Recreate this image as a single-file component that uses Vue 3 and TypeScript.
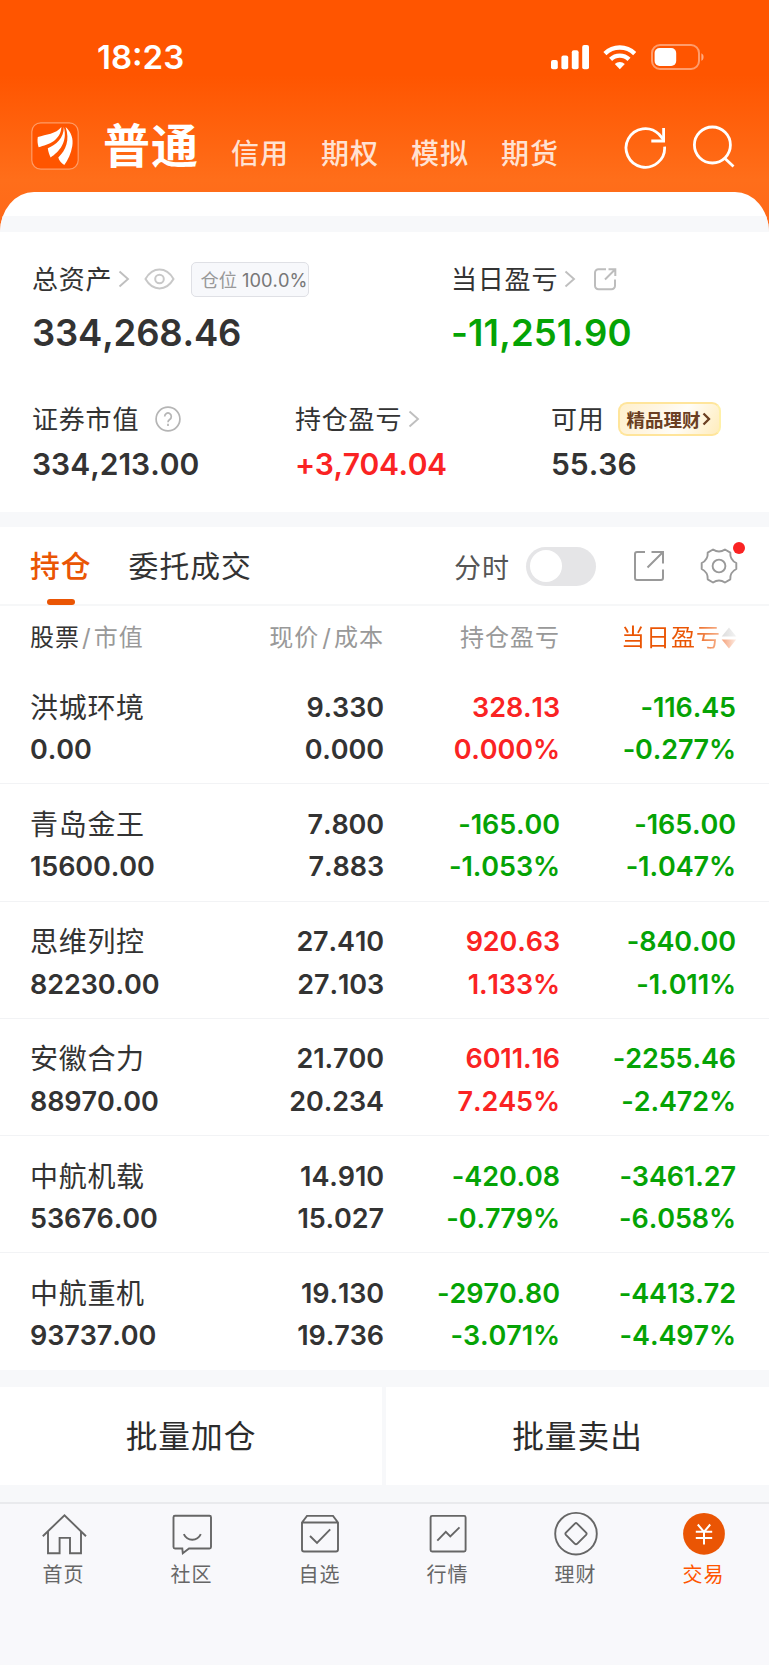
<script setup lang="ts">
type Pair = [string, string]

interface Holding {
  name: string
  value: string
  price: Pair
  profit: Pair
  day: Pair
}

const otherAccounts: string[] = ['信用', '期权', '模拟', '期货']

const holdings: Holding[] = [
  { name: '洪城环境', value: '0.00', price: ['9.330', '0.000'], profit: ['328.13', '0.000%'], day: ['-116.45', '-0.277%'] },
  { name: '青岛金王', value: '15600.00', price: ['7.800', '7.883'], profit: ['-165.00', '-1.053%'], day: ['-165.00', '-1.047%'] },
  { name: '思维列控', value: '82230.00', price: ['27.410', '27.103'], profit: ['920.63', '1.133%'], day: ['-840.00', '-1.011%'] },
  { name: '安徽合力', value: '88970.00', price: ['21.700', '20.234'], profit: ['6011.16', '7.245%'], day: ['-2255.46', '-2.472%'] },
  { name: '中航机载', value: '53676.00', price: ['14.910', '15.027'], profit: ['-420.08', '-0.779%'], day: ['-3461.27', '-6.058%'] },
  { name: '中航重机', value: '93737.00', price: ['19.130', '19.736'], profit: ['-2970.80', '-3.071%'], day: ['-4413.72', '-4.497%'] },
]

const navItems: string[] = ['首页', '社区', '自选', '行情', '理财', '交易']

const tone = (pair: Pair): string => (pair[0].startsWith('-') ? 'down' : 'up')
</script>

<template>
  <div class="screen">
    <header class="top">
      <div class="status">
        <span class="time">18:23</span>
        <svg class="status-icons" width="156" height="28" viewBox="0 0 156 28" fill="#fff">
          <rect x="1" y="17" width="6.8" height="9.2" rx="2" />
          <rect x="11.4" y="12.4" width="6.8" height="13.8" rx="2" />
          <rect x="21.8" y="7.2" width="6.8" height="19" rx="2" />
          <rect x="32.2" y="2" width="6.8" height="24.2" rx="2" />
          <g fill="none" stroke="#fff" stroke-width="4.4">
            <path d="M54.9 10.6a21.3 21.3 0 0 1 29.8 0" />
            <path d="M60.6 16.4a13.2 13.2 0 0 1 18.4 0" />
          </g>
          <path d="M69.8 26.2l-5-5.2a7.4 7.4 0 0 1 10 0z" />
          <rect x="102" y="2" width="47" height="24" rx="8" fill="none" stroke="#fff" stroke-opacity=".42" stroke-width="2" />
          <rect x="104.6" y="5" width="21.6" height="18" rx="5" />
          <path d="M151.4 10.2a4.4 4.4 0 0 1 0 7.6z" fill-opacity=".5" />
        </svg>
      </div>
      <div class="accounts">
        <svg class="logo" width="48" height="48" viewBox="0 0 48 48">
          <rect x=".8" y=".8" width="46.4" height="46.4" rx="9" fill="#ff5500" stroke="#ff9c66" stroke-width="1.2" />
          <g fill="#fff">
            <path d="M30.4 5C25 12 15 12.500 6.800 15C6.200 18.500 6.600 22 7.600 25.200C18 22.500 29.500 18.500 30.400 5Z" />
            <path d="M32.800 5C33 16 25 22.800 16.800 26.200C17.200 29.500 18.300 32.500 19.600 35.400C28 30 37 20 32.800 5Z" />
            <path d="M34.600 5C40.500 10.500 42.500 17 41.300 24C40 31.500 37 38 33.300 43C30.500 41 28 38.500 27.300 35.500C35 28 39 18 34.600 5Z" />
          </g>
        </svg>
        <h1 class="current">普通</h1>
        <nav class="others">
          <span v-for="a in otherAccounts" :key="a">{{ a }}</span>
        </nav>
        <svg class="tools" width="112" height="44" viewBox="0 0 112 44" fill="none" stroke="#fff" stroke-width="2.8">
          <path d="M41.600 21.600A19.300 19.300 0 1 1 36 9.300L40.400 14.500" />
          <path d="M40.600 3v13H28.300" />
          <circle cx="89.400" cy="20" r="18" />
          <path d="M101.500 33l9 8.600" />
        </svg>
      </div>
    </header>

    <main class="sheet">
      <div class="strip"></div>

      <section class="assets">
        <div class="line main-labels">
          <div class="half">
            <span class="label">总资产</span>
            <svg class="chev" width="12" height="18" viewBox="0 0 12 18"><path d="M1.500 1.500l8.500 7.500-8.500 7.500" /></svg>
            <svg class="eye" width="31" height="22" viewBox="0 0 31 22" fill="none" stroke="#c8c8c8" stroke-width="2">
              <path d="M1.500 11C5 5 9.500 1.600 15.500 1.600S26 5 29.500 11C26 17 21.500 20.400 15.500 20.400S5 17 1.500 11Z" />
              <circle cx="15.500" cy="11" r="4.300" />
            </svg>
            <span class="position"><i>仓位</i> 100.0%</span>
          </div>
          <div class="half">
            <span class="label">当日盈亏</span>
            <svg class="chev" width="12" height="18" viewBox="0 0 12 18"><path d="M1.500 1.500l8.500 7.500-8.500 7.500" /></svg>
            <svg class="share-sm" width="24" height="24" viewBox="0 0 24 24" fill="none" stroke="#bdbdbd" stroke-width="2">
              <path d="M13 2.200H5.500a3.500 3.500 0 0 0-3.500 3.500v13a3.500 3.500 0 0 0 3.500 3.500h13a3.500 3.500 0 0 0 3.500-3.500V12.500" />
              <path d="M12 12.500L22 2.500M15.500 2.200H22.300V9" />
            </svg>
          </div>
        </div>
        <div class="line main-values">
          <span class="half dark">334,268.46</span>
          <span class="half down">-11,251.90</span>
        </div>
        <div class="line sub-labels">
          <div class="c1">
            <span class="label">证券市值</span>
            <svg class="help" width="26" height="26" viewBox="0 0 26 26" fill="none" stroke="#b5b5b5" stroke-width="1.700">
              <circle cx="13" cy="13" r="11.900" />
              <path d="M9.700 10.500a3.300 3.500 0 1 1 5 3c-1.200.8-1.700 1.300-1.700 2.700M13 17.800v2.200" />
            </svg>
          </div>
          <div class="c2">
            <span class="label">持仓盈亏</span>
            <svg class="chev" width="12" height="18" viewBox="0 0 12 18"><path d="M1.500 1.500l8.500 7.500-8.500 7.500" /></svg>
          </div>
          <div class="c3">
            <span class="label">可用</span>
            <span class="promo">精品理财<svg width="9" height="14" viewBox="0 0 9 14"><path d="M1.500 1.500l5.500 5.500-5.500 5.500" fill="none" stroke="#6b3f22" stroke-width="2.300" /></svg></span>
          </div>
        </div>
        <div class="line sub-values">
          <span class="c1 dark">334,213.00</span>
          <span class="c2 up">+3,704.04</span>
          <span class="c3 dark">55.36</span>
        </div>
      </section>

      <div class="band"></div>

      <section class="tabs">
        <span class="tab active">持仓</span>
        <span class="tab">委托成交</span>
        <span class="minute">分时</span>
        <span class="toggle"><i></i></span>
        <svg class="share" width="32" height="32" viewBox="0 0 32 32" fill="none" stroke="#999" stroke-width="2">
          <path d="M12 2H4a2 2 0 0 0-2 2v24a2 2 0 0 0 2 2h24a2 2 0 0 0 2-2V19.500" />
          <path d="M14.500 17.500L30 2M18.500 2H30V13.500" />
        </svg>
        <span class="settings">
          <svg width="38" height="38" viewBox="0 0 38 38" fill="none" stroke="#999" stroke-width="1.900" stroke-linejoin="round">
            <path d="M13 2.500Q19 6.500 25 2.500L30.300 5.600Q29.800 12.750 36.300 16V22Q29.800 25.250 30.300 32.400L25 35.500Q19 31.500 13 35.500L7.700 32.400Q8.200 25.250 1.700 22V16Q8.200 12.750 7.700 5.600Z" />
            <circle cx="19" cy="19" r="6.400" />
          </svg>
          <b class="dot"></b>
        </span>
      </section>

      <section class="list">
        <div class="row head">
          <span class="col-a"><em>股票</em><u>/</u>市值</span>
          <span class="col">现价<u>/</u>成本</span>
          <span class="col">持仓盈亏</span>
          <span class="col sorted">
            <span class="sort-label">当日盈亏</span>
            <svg width="16" height="22" viewBox="0 0 16 22">
              <defs>
                <linearGradient id="sortUp" x1="0" x2="1"><stop offset="0" stop-color="#dcdcdc" /><stop offset="1" stop-color="#f3f3f3" /></linearGradient>
                <linearGradient id="sortDown" x1="0" x2="1"><stop offset="0" stop-color="#f5a078" /><stop offset="1" stop-color="#fdeee6" /></linearGradient>
              </defs>
              <path d="M8 .6L15.300 9.600H.7z" fill="url(#sortUp)" />
              <path d="M8 21.400L15.300 12.400H.7z" fill="url(#sortDown)" />
            </svg>
          </span>
        </div>
        <div v-for="h in holdings" :key="h.name" class="row stock">
          <div class="col-a"><span class="name">{{ h.name }}</span><span>{{ h.value }}</span></div>
          <div class="col"><span v-for="p in h.price" :key="p">{{ p }}</span></div>
          <div class="col" :class="tone(h.profit)"><span v-for="p in h.profit" :key="p">{{ p }}</span></div>
          <div class="col" :class="tone(h.day)"><span v-for="p in h.day" :key="p">{{ p }}</span></div>
        </div>
      </section>

      <section class="batch">
        <button type="button">批量加仓</button>
        <button type="button">批量卖出</button>
      </section>
    </main>

    <nav class="bottom">
      <div v-for="(label, i) in navItems" :key="label" class="item" :class="{ on: i === 5 }">
        <svg width="48" height="48" viewBox="0 0 48 48" fill="none" stroke="#666" stroke-width="1.900">
          <g v-if="i === 0"><path d="M2.800 26.200L24.500 5.300L46 26.200" /><path d="M8 21.500V43.200H19.600V27.900H30V43.200H41V21.500" /></g>
          <g v-else-if="i === 1">
            <path d="M7 5.800H41.500a1.500 1.500 0 0 1 1.500 1.500V37a1.500 1.500 0 0 1-1.500 1.500H21L14.800 43.300L14.300 38.500H7A1.500 1.500 0 0 1 5.500 37V7.300A1.500 1.500 0 0 1 7 5.800Z" />
            <path d="M15.800 24.200c3.500 7.300 13.500 7.300 17 0" />
          </g>
          <g v-else-if="i === 2">
            <path d="M6 12.500L11 5.900H37L42 12.500V39.500a2 2 0 0 1-2 2H8a2 2 0 0 1-2-2ZM6 12.500H42" />
            <path d="M14 26l7 7L34.200 19.300" />
          </g>
          <g v-else-if="i === 3"><rect x="6.600" y="5.900" width="35" height="35.600" rx="1.500" /><path d="M13.300 30.700L21.800 21.900L26.300 26.500L35.500 17.300" /></g>
          <g v-else-if="i === 4"><circle cx="24" cy="23.700" r="20.800" /><path d="M22.900 13.600q1.100-1 2.200 0l9 9q1 1.100 0 2.200l-9 9q-1.100 1-2.200 0l-9-9q-1-1.100 0-2.200z" /></g>
          <g v-else><circle cx="24" cy="23.800" r="20.900" fill="#ea5504" stroke="none" /><path d="M17.800 14.500L24 22L30.200 14.500M24 21.500V34.500M15.800 21.700H32.200M15.800 28H32.200" stroke="#fff" stroke-width="2" /></g>
        </svg>
        <span>{{ label }}</span>
      </div>
    </nav>
  </div>
</template>

<style>
body {
  background: #f8f8fb;
}
</style>

<style scoped>
.screen {
  width: 769px;
  height: 1665px;
  overflow: hidden;
  display: flex;
  flex-direction: column;
  background: linear-gradient(#ff5500 0, #ff5500 75px, #ff6e1a 180px, #ff6818 232px);
  font-family: Inter, 'Noto Sans CJK SC', sans-serif;
  font-kerning: none;
  color: #333;
}
.screen * {
  box-sizing: border-box;
}
i, em, u {
  font-style: normal;
  text-decoration: none;
}
svg {
  display: block;
  flex: none;
}
.top {
  height: 192px;
  flex: none;
  color: #fff;
}
.status {
  height: 114px;
  padding: 0 63px 0 97px;
  display: flex;
  justify-content: space-between;
  align-items: center;
}
.time {
  font-size: 33px;
  font-weight: 600;
  line-height: 40px;
  font-kerning: normal;
}
.accounts {
  height: 64px;
  padding: 0 34px 0 31px;
  display: flex;
  align-items: center;
}
.current {
  margin: 0 0 0 24px;
  width: 128px;
  font-size: 47px;
  font-weight: 700;
  line-height: 60px;
  letter-spacing: 1px;
}
.others {
  display: flex;
  gap: 32px;
  padding-top: 16px;
  font-size: 28px;
  font-weight: 500;
  line-height: 34px;
  letter-spacing: 1px;
  color: rgba(255, 255, 255, .82);
}
.tools {
  margin: 1px 0 0 auto;
}
.sheet {
  flex: none;
  height: 1310px;
  background: #fff;
  border-radius: 34px 34px 0 0 / 40px 40px 0 0;
  overflow: hidden;
}
.strip {
  margin-top: 24px;
  height: 16px;
  background: #f7f8fa;
}
.assets {
  height: 280px;
  padding: 29px 0 0 32px;
}
.line,
.line > div {
  display: flex;
  align-items: center;
}
.half { width: 419px; flex: none; }
.c1 { width: 263px; }
.c2 { width: 256px; }
.c3 { width: 218px; }
.label {
  padding-top: 2px;
  font-size: 26px;
  line-height: 36px;
  letter-spacing: .8px;
  white-space: nowrap;
}
.main-labels { height: 36px; }
.main-values {
  height: 72px;
  font-size: 36.500px;
  font-weight: 600;
  letter-spacing: -.2px;
}
.main-values .down { letter-spacing: .1px; }
.sub-labels { height: 36px; margin-top: 32px; }
.sub-values {
  height: 53px;
  font-size: 30px;
  font-weight: 600;
}
.sub-values .up { letter-spacing: -.4px; }
.chev {
  margin-left: 6px;
  fill: none;
  stroke: #bfbfbf;
  stroke-width: 1.900;
}
.eye { margin-left: 14px; }
.position {
  margin-left: 16px;
  width: 118px;
  height: 35px;
  padding-left: 8px;
  border: 1px solid #dfe0e5;
  border-radius: 5px;
  background: #f7f8fb;
  font-size: 18.300px;
  line-height: 34px;
  color: #777;
  white-space: nowrap;
}
.position i { color: #999; }
.share-sm { margin-left: 17px; }
.help { margin-left: 16px; }
.promo {
  margin-left: 13px;
  width: 103px;
  height: 34px;
  padding-left: 7px;
  display: flex;
  align-items: center;
  gap: 1px;
  border: 2px solid #ffe59b;
  border-right-color: #fff0a8;
  border-radius: 9px;
  background: linear-gradient(120deg, #fff0cc 0%, #fff6e3 35%, #fffdf8 60%, #ffecbc 100%);
  font-size: 18.500px;
  font-weight: 700;
  color: #6b3f22;
  white-space: nowrap;
}
.dark { color: #333; }
.up { color: #fa2323; }
.down { color: #05a305; }
.band {
  height: 15px;
  background: #f7f8fa;
}
.tabs {
  height: 79px;
  padding: 1px 31px 0 30px;
  display: flex;
  align-items: center;
  border-bottom: 2px solid #f6f7f8;
}
.tab {
  position: relative;
  padding-top: 1px;
  font-size: 29.800px;
  line-height: 75px;
  letter-spacing: 1px;
}
.tab + .tab { margin-left: 37px; }
.active {
  font-weight: 500;
  color: #ea5504;
}
.active::after {
  content: '';
  position: absolute;
  left: 17px;
  bottom: -1px;
  width: 28px;
  height: 6px;
  border-radius: 3px;
  background: #ea5504;
}
.minute {
  margin-left: auto;
  font-size: 27px;
  letter-spacing: 1px;
  color: #555;
}
.toggle {
  margin-left: 16px;
  width: 70px;
  height: 39px;
  padding: 3.500px;
  border-radius: 20px;
  background: #e5e5e7;
}
.toggle i {
  display: block;
  width: 32px;
  height: 32px;
  border-radius: 50%;
  background: #fff;
}
.share { margin-left: 37px; }
.settings {
  position: relative;
  margin-left: 35px;
}
.dot {
  position: absolute;
  left: 33px;
  top: -5px;
  width: 12px;
  height: 12px;
  border-radius: 50%;
  background: #fa2323;
}
.row {
  display: grid;
  grid-template-columns: 200px 154px 176px 176px;
  padding-left: 30px;
}
.head {
  height: 61px;
  line-height: 63px;
  font-size: 24px;
  letter-spacing: 1px;
  color: #999;
}
.head em { color: #333; }
.head u {
  margin: 0 2px 0 3px;
}
.head .col-a u { margin: 0 2px 0 2px; }
.col { text-align: right; }
.sorted {
  display: flex;
  justify-content: flex-end;
  align-items: center;
}
.sorted svg { margin: 1px -1px 0 0; }
.sort-label {
  background: linear-gradient(90deg, #ea5504 70%, #f7b896 100%);
  background-clip: text;
  color: transparent;
}
.stock {
  height: 117.300px;
  padding-top: 19.500px;
  border-bottom: 1px solid #f2f3f5;
  font-size: 27px;
  font-weight: 600;
  letter-spacing: -.1px;
}
.stock:last-child {
  height: 116.500px;
  border-bottom: 0;
}
.stock span {
  display: block;
  line-height: 42.500px;
}
.stock .name {
  font-size: 28px;
  font-weight: 400;
  letter-spacing: .7px;
}
.batch {
  height: 133px;
  padding: 17px 0 18px;
  display: grid;
  grid-template-columns: 382px 383px;
  gap: 4px;
  background: #f7f8fa;
}
.batch button {
  border: 0;
  padding: 1px 0 0;
  background: #fff;
  font: 400 31.700px/97px Inter, 'Noto Sans CJK SC', sans-serif;
  letter-spacing: 1px;
  color: #2b2b2b;
}
.bottom {
  height: 163px;
  flex: none;
  display: flex;
  padding-right: 1px;
  border-top: 2px solid #e9eaed;
  background: #f8f8fb;
}
.item {
  flex: 1;
  padding-top: 6px;
  display: flex;
  flex-direction: column;
  align-items: center;
  font-size: 20px;
  line-height: 35px;
  letter-spacing: 1px;
  color: #666;
}
.item span { padding-right: 1px; }
.on { color: #ff5500; }
</style>
